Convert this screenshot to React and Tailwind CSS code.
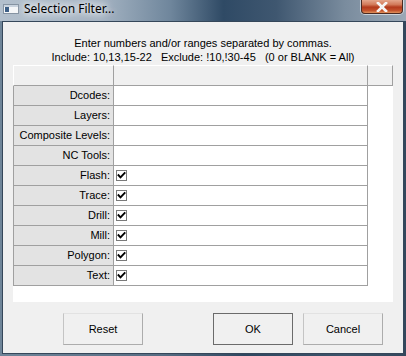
import React from "react";

const rows = [
  { label: "Dcodes:", check: false },
  { label: "Layers:", check: false },
  { label: "Composite Levels:", check: false },
  { label: "NC Tools:", check: false },
  { label: "Flash:", check: true },
  { label: "Trace:", check: true },
  { label: "Drill:", check: true },
  { label: "Mill:", check: true },
  { label: "Polygon:", check: true },
  { label: "Text:", check: true },
];

function Check() {
  return (
    <div className="ml-[2px] w-[11px] h-[11px] border border-[#7a7a7a] bg-white flex items-center justify-center">
      <svg width="9" height="9" viewBox="0 0 9 9">
        <polyline points="1.5,4.2 3.5,6.4 7.6,2" fill="none" stroke="#000" strokeWidth="1.9" strokeLinecap="square" />
      </svg>
    </div>
  );
}

function WinButton({ children, def, className }) {
  return (
    <div
      className={
        "w-[80px] h-[32px] flex items-center justify-center text-[11px] text-black bg-[#f0f0f0] border " +
        (def
          ? "border-[#6b6b6b]"
          : "border-[#acacac] border-t-[#e2e2e2] border-l-[#c4c4c4]") +
        " " +
        (className || "")
      }
    >
      {children}
    </div>
  );
}

export default function App() {
  return (
    <div className="w-[406px] h-[356px] flex flex-col overflow-hidden bg-[linear-gradient(90deg,#6f8599_0%,#566c82_40%,#2e4760_60%,#3c536a_85%,#33475c_100%)] font-['Liberation_Sans',Arial,sans-serif]">
      {/* Title bar */}
      <div className="h-[21px] flex items-start bg-[linear-gradient(90deg,#b3c0cd_0%,#a4b3c2_25%,#6f869c_42%,#2f4a65_55%,#3f5770_68%,#7a8c9e_85%,#9aa8b6_100%)]">
        <div className="ml-[3px] mt-[4px]">
          <svg width="16" height="10" viewBox="0 0 16 10">
            <rect x="0.5" y="0.5" width="15" height="9" fill="#f4f6f8" stroke="#8593a2" />
            <rect x="1" y="1" width="14" height="2" fill="#c9d3de" />
            <rect x="2" y="3" width="4" height="5" fill="#3d5f86" />
          </svg>
        </div>
        <div className="ml-[5px] mt-[1px] text-[12px] leading-[16px] text-black font-['Noto_Sans',sans-serif] [text-shadow:0_0_6px_#ffffff,0_0_10px_#ffffff,0_0_14px_#ffffff]">
          Selection Filter...
        </div>
        <div className="ml-auto mr-[3px] w-[42px] h-[14px] rounded-b-[4px] border border-t-0 border-[#4a2a22] shadow-[0_0_0_1px_rgba(255,255,255,0.55)] bg-[linear-gradient(180deg,#e4a68c_0%,#d27a5a_35%,#b33a1c_55%,#c2512c_80%,#e0925c_100%)] flex items-center justify-center">
          <svg width="12" height="10" viewBox="0 0 12 10">
            <path d="M2 1 L10 9 M10 1 L2 9" stroke="#ffffff" strokeWidth="2.6" strokeLinecap="square" />
            <path d="M2 1 L10 9 M10 1 L2 9" stroke="#f2f2f2" strokeWidth="1.6" strokeLinecap="square" />
          </svg>
        </div>
      </div>

      {/* Client area */}
      <div className="flex-1 mx-[2px] mb-[2px] border border-[#35475a] bg-[#f0f0f0] flex flex-col text-black">
        <div className="pt-[14px] text-[11px] leading-[14px] text-center whitespace-pre">
          <div>Enter numbers and/or ranges separated by commas.</div>
          <div>{"Include: 10,13,15-22   Exclude: !10,!30-45   (0 or BLANK = All)"}</div>
        </div>

        {/* Grid */}
        <div className="mt-[1px] mx-[10px] h-[237px] bg-white flex flex-col">
          <div className="flex h-[21px]">
            <div className="w-[101px] bg-[#f0f0f0] border-t border-t-white border-l border-l-white border-b border-r border-[#a0a0a0]"></div>
            <div className="w-[254px] bg-[#f0f0f0] border-t border-t-white border-b border-r border-[#a0a0a0]"></div>
            <div className="w-[25px] bg-[#f0f0f0] border-t border-t-white border-b border-r border-[#a0a0a0]"></div>
          </div>
          {rows.map((r) => (
            <div key={r.label} className="flex h-[20px]">
              <div className="w-[101px] bg-[#e3e3e3] border-l border-b border-r border-[#a0a0a0] flex items-center justify-end pr-[3px] text-[11px] leading-none">
                {r.label}
              </div>
              <div className="w-[254px] border-b border-r border-[#a0a0a0] flex items-center">
                {r.check && <Check />}
              </div>
            </div>
          ))}
        </div>

        {/* Buttons */}
        <div className="mt-[11px] flex">
          <WinButton className="ml-[60px]">Reset</WinButton>
          <WinButton def className="ml-[70px]">OK</WinButton>
          <WinButton className="ml-[10px]">Cancel</WinButton>
        </div>
      </div>
    </div>
  );
}
